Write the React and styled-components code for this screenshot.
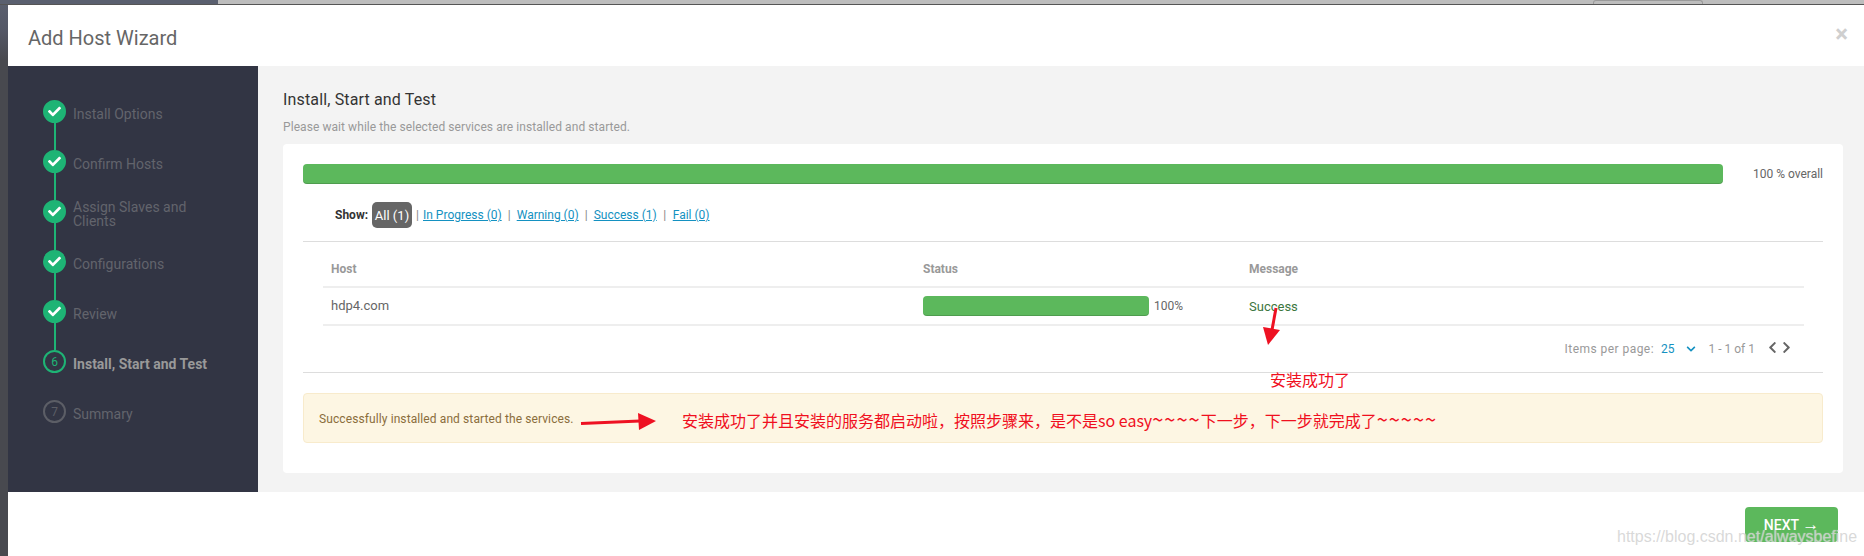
import React from "react";
import styled, { createGlobalStyle } from "styled-components";
import { FaCheck, FaChevronLeft, FaChevronRight, FaChevronDown } from "react-icons/fa";

const Global = createGlobalStyle`
  html, body { margin: 0; padding: 0; height: 100%; overflow: hidden; }
  body { font-family: Roboto, "Liberation Sans", "Noto Sans CJK SC", sans-serif; }
  * { box-sizing: border-box; }
`;

const Page = styled.div`
  position: relative;
  width: 1864px;
  height: 556px;
  overflow: hidden;
  display: flex;
  flex-direction: column;
  background: linear-gradient(#5a606f 0, #545866 30px, #48494f 60px, #48494f 100%);
`;
const TopStrip = styled.div`
  height: 5px;
  display: flex;
  border-bottom: 1px solid #555;
`;
const StripLeft = styled.div`
  width: 218px;
  background: #5a606f;
`;
const StripRight = styled.div`
  flex: 1;
  background: #bdbdbd;
  padding-left: 1375px;
  display: flex;
`;
const StripButton = styled.div`
  width: 110px;
  height: 4px;
  border: 1px solid #9a9a9a;
  border-bottom: none;
  border-radius: 3px 3px 0 0;
`;
const Modal = styled.div`
  margin-left: 8px;
  flex: 1;
  background: #fff;
  display: flex;
  flex-direction: column;
`;
const Header = styled.header`
  height: 61px;
  flex: none;
  display: flex;
  align-items: center;
  justify-content: space-between;
  padding: 4px 16px 0 20px;
`;
const Title = styled.h1`
  margin: 0;
  font-size: 20px;
  font-weight: 400;
  color: #666;
  line-height: 24px;
`;
const Close = styled.span`
  font-size: 24px;
  line-height: 20px;
  font-weight: 700;
  color: #cfcfcf;
  margin-top: -8px;
`;
const Body = styled.div`
  height: 426px;
  flex: none;
  display: flex;
`;
const Sidebar = styled.nav`
  width: 250px;
  flex: none;
  background: #323544;
  padding: 34px 0 0 35px;
`;
const Step = styled.div`
  position: relative;
  height: 50px;
  display: flex;
  gap: 7px;
  align-items: flex-start;
`;
const Connector = styled.span`
  position: absolute;
  left: 10.5px;
  top: 22px;
  width: 2px;
  height: 28px;
  background: #1eb475;
`;
const Circle = styled.span`
  flex: none;
  width: 23px;
  height: 23px;
  border-radius: 50%;
  display: flex;
  align-items: center;
  justify-content: center;
  font-size: ${p => (p.$state === "done" ? 13 : 12)}px;
  background: ${p => (p.$state === "done" ? "#1eb475" : "transparent")};
  border: 2px solid ${p => (p.$state === "todo" ? "#5c5e66" : "#1eb475")};
  color: ${p => (p.$state === "todo" ? "#5c5e66" : p.$state === "active" ? "#1eb475" : "#fff")};
`;
const StepLabel = styled.span`
  width: 145px;
  height: 23px;
  display: flex;
  align-items: center;
  font-size: 14px;
  line-height: 14px;
  padding-top: 4px;
  font-weight: ${p => (p.$active ? 700 : 400)};
  color: ${p => (p.$active ? "#999" : "#62646c")};
`;
const Main = styled.main`
  flex: 1;
  background: #f3f3f3;
  padding: 24px 21px 0 25px;
`;
const Heading = styled.h2`
  margin: 0;
  font-size: 16px;
  line-height: 20px;
  font-weight: 400;
  letter-spacing: 0.15px;
  color: #333;
`;
const Sub = styled.p`
  margin: 9px 0 0;
  font-size: 12px;
  line-height: 16px;
  letter-spacing: 0.07px;
  color: #999;
`;
const Card = styled.section`
  margin-top: 9px;
  height: 329px;
  background: #fff;
  border-radius: 4px;
  padding: 20px 20px 0;
`;
const OverallRow = styled.div`
  display: flex;
  align-items: center;
  gap: 30px;
`;
const Bar = styled.div`
  height: 20px;
  flex: ${p => (p.$width ? "none" : 1)};
  width: ${p => (p.$width ? p.$width + "px" : "auto")};
  background: #5cb85c;
  border-radius: 4px;
  box-shadow: inset 0 -1px 0 rgba(0, 0, 0, 0.15);
`;
const Overall = styled.span`
  width: 70px;
  flex: none;
  white-space: nowrap;
  font-size: 12px;
  color: #666;
`;
const Filters = styled.div`
  margin-top: 18px;
  padding: 0 0 13px 32px;
  border-bottom: 1px solid #ddd;
  height: 40px;
  display: flex;
  align-items: flex-start;
  font-size: 12px;
`;
const ShowLabel = styled.strong`
  line-height: 26px;
  color: #333;
  font-weight: 700;
  width: 37px;
`;
const AllPill = styled.span`
  width: 40px;
  height: 26px;
  background: #666;
  color: #fff;
  font-size: 13px;
  border-radius: 5px;
  display: flex;
  align-items: center;
  justify-content: center;
`;
const Sep = styled.span`
  line-height: 26px;
  color: #888;
  width: ${p => p.$w}px;
  text-align: center;
`;
const FilterLink = styled.a`
  line-height: 26px;
  color: #1491c1;
  text-decoration: underline;
  white-space: nowrap;
`;
const Table = styled.div`
  margin: 0 19px 0 20px;
`;
const Row = styled.div`
  display: grid;
  grid-template-columns: 600px 326px 1fr;
  align-items: center;
  height: ${p => p.$h}px;
  padding: ${p => p.$pad || "0"};
  border-bottom: 2px solid #eee;
`;
const Th = styled.span`
  padding-left: ${p => p.$pad || 0}px;
  font-size: 12px;
  font-weight: 700;
  color: #999;
`;
const HostCell = styled.span`
  padding-left: 8px;
  padding-bottom: 2px;
  font-size: 13px;
  color: #666;
`;
const StatusCell = styled.div`
  display: flex;
  align-items: center;
  gap: 5px;
  font-size: 12px;
  color: #666;
`;
const MessageCell = styled.span`
  font-size: 13px;
  color: #3c763d;
`;
const Pager = styled.div`
  height: 46px;
  margin-right: 33px;
  display: flex;
  align-items: center;
  justify-content: flex-end;
  font-size: 12px;
  color: #999;
`;
const PerLabel = styled.span`
  letter-spacing: 0.45px;
`;
const PerPage = styled.span`
  color: #1491c1;
  margin-left: 7px;
`;
const DownIcon = styled(FaChevronDown)`
  color: #1491c1;
  font-size: 10px;
  margin: 0 13px 0 11px;
`;
const NavIcons = styled.span`
  display: flex;
  margin: -3px -3px 0 11px;
  gap: 1px;
  color: #666;
  font-size: 13px;
`;
const Divider = styled.div`
  height: 1px;
  background: #ddd;
`;
const Alert = styled.div`
  margin-top: 20px;
  height: 50px;
  display: flex;
  align-items: center;
  padding: 2px 0 0 15px;
  background: #fdf6e3;
  border: 1px solid #f8ebcc;
  border-radius: 4px;
  font-size: 12px;
  letter-spacing: 0.1px;
  color: #8a6d3b;
`;
const Footer = styled.footer`
  flex: 1;
  display: flex;
  justify-content: flex-end;
  padding: 15px 26px 0 0;
`;
const NextButton = styled.button`
  width: 93px;
  height: 35px;
  border: none;
  border-radius: 4px;
  background: #5cb85c;
  color: #fff;
  font-family: inherit;
  font-size: 14px;
  font-weight: 500;
  padding: 0;
`;
const NextArrow = styled.span`
  font-size: 17px;
  line-height: 14px;
  font-family: "Liberation Sans", sans-serif;
`;
const Note = styled.span`
  position: absolute;
  left: ${p => p.$x}px;
  top: ${p => p.$y}px;
  color: #f00f1e;
  font-size: 16px;
  line-height: 20px;
  white-space: nowrap;
  font-family: "Noto Sans CJK SC", "Open Sans", sans-serif;
`;
const Tildes = styled.span`
  font-size: 20px;
  letter-spacing: 1px;
  line-height: 16px;
`;
const ArrowSvg = styled.svg`
  position: absolute;
  left: 0;
  top: 0;
  pointer-events: none;
`;
const Watermark = styled.span`
  position: absolute;
  left: 1617px;
  top: 526px;
  font-family: "Liberation Sans", sans-serif;
  font-size: 16px;
  line-height: 22px;
  color: rgba(200, 200, 200, 0.7);
  text-shadow: 0 0 1px rgba(255, 255, 255, 0.7);
  white-space: nowrap;
`;

const steps = [
  ["Install Options", "done"],
  ["Confirm Hosts", "done"],
  ["Assign Slaves and Clients", "done"],
  ["Configurations", "done"],
  ["Review", "done"],
  ["Install, Start and Test", "active", 6],
  ["Summary", "todo", 7],
];

export default function App() {
  return (
    <Page>
      <Global />
      <TopStrip>
        <StripLeft />
        <StripRight>
          <StripButton />
        </StripRight>
      </TopStrip>
      <Modal>
        <Header>
          <Title>Add Host Wizard</Title>
          <Close>×</Close>
        </Header>
        <Body>
          <Sidebar>
            {steps.map(([label, state, n], i) => (
              <Step key={label}>
                {i < 5 && <Connector />}
                <Circle $state={state}>{state === "done" ? <FaCheck /> : n}</Circle>
                <StepLabel $active={state === "active"}>{label}</StepLabel>
              </Step>
            ))}
          </Sidebar>
          <Main>
            <Heading>Install, Start and Test</Heading>
            <Sub>Please wait while the selected services are installed and started.</Sub>
            <Card>
              <OverallRow>
                <Bar />
                <Overall>100 % overall</Overall>
              </OverallRow>
              <Filters>
                <ShowLabel>Show:</ShowLabel>
                <AllPill>All (1)</AllPill>
                <Sep $w={11}>|</Sep>
                <FilterLink>In Progress (0)</FilterLink>
                <Sep $w={15}>|</Sep>
                <FilterLink>Warning (0)</FilterLink>
                <Sep $w={15}>|</Sep>
                <FilterLink>Success (1)</FilterLink>
                <Sep $w={16}>|</Sep>
                <FilterLink>Fail (0)</FilterLink>
              </Filters>
              <Table>
                <Row $h={46} $pad="9px 0 0">
                  <Th $pad={8}>Host</Th>
                  <Th>Status</Th>
                  <Th>Message</Th>
                </Row>
                <Row $h={38}>
                  <HostCell>hdp4.com</HostCell>
                  <StatusCell>
                    <Bar $width={226} />
                    100%
                  </StatusCell>
                  <MessageCell>Success</MessageCell>
                </Row>
              </Table>
              <Pager>
                <PerLabel>Items per page:</PerLabel>
                <PerPage>25</PerPage>
                <DownIcon />
                1 - 1 of 1
                <NavIcons>
                  <FaChevronLeft />
                  <FaChevronRight />
                </NavIcons>
              </Pager>
              <Divider />
              <Alert>Successfully installed and started the services.</Alert>
            </Card>
          </Main>
        </Body>
        <Footer>
          <NextButton>NEXT <NextArrow>→</NextArrow></NextButton>
        </Footer>
      </Modal>
      <Note $x={1270} $y={369}>安装成功了</Note>
      <Note $x={682} $y={410}>安装成功了并且安装的服务都启动啦，按照步骤来，是不是so easy<Tildes>~~~~</Tildes>下一步，下一步就完成了<Tildes>~~~~~</Tildes></Note>
      <ArrowSvg width="1864" height="556" viewBox="0 0 1864 556">
        <path d="M581 423.5L640 421" stroke="#ee1122" strokeWidth="3" fill="none" />
        <path d="M638 413L656 421L639 430Z" fill="#ee1122" />
        <path d="M1276 308L1272 330" stroke="#ee1122" strokeWidth="3" fill="none" />
        <path d="M1263 327L1280 330L1268 345Z" fill="#ee1122" />
      </ArrowSvg>
      <Watermark>https://blog.csdn.net/alwaysbefine</Watermark>
    </Page>
  );
}
